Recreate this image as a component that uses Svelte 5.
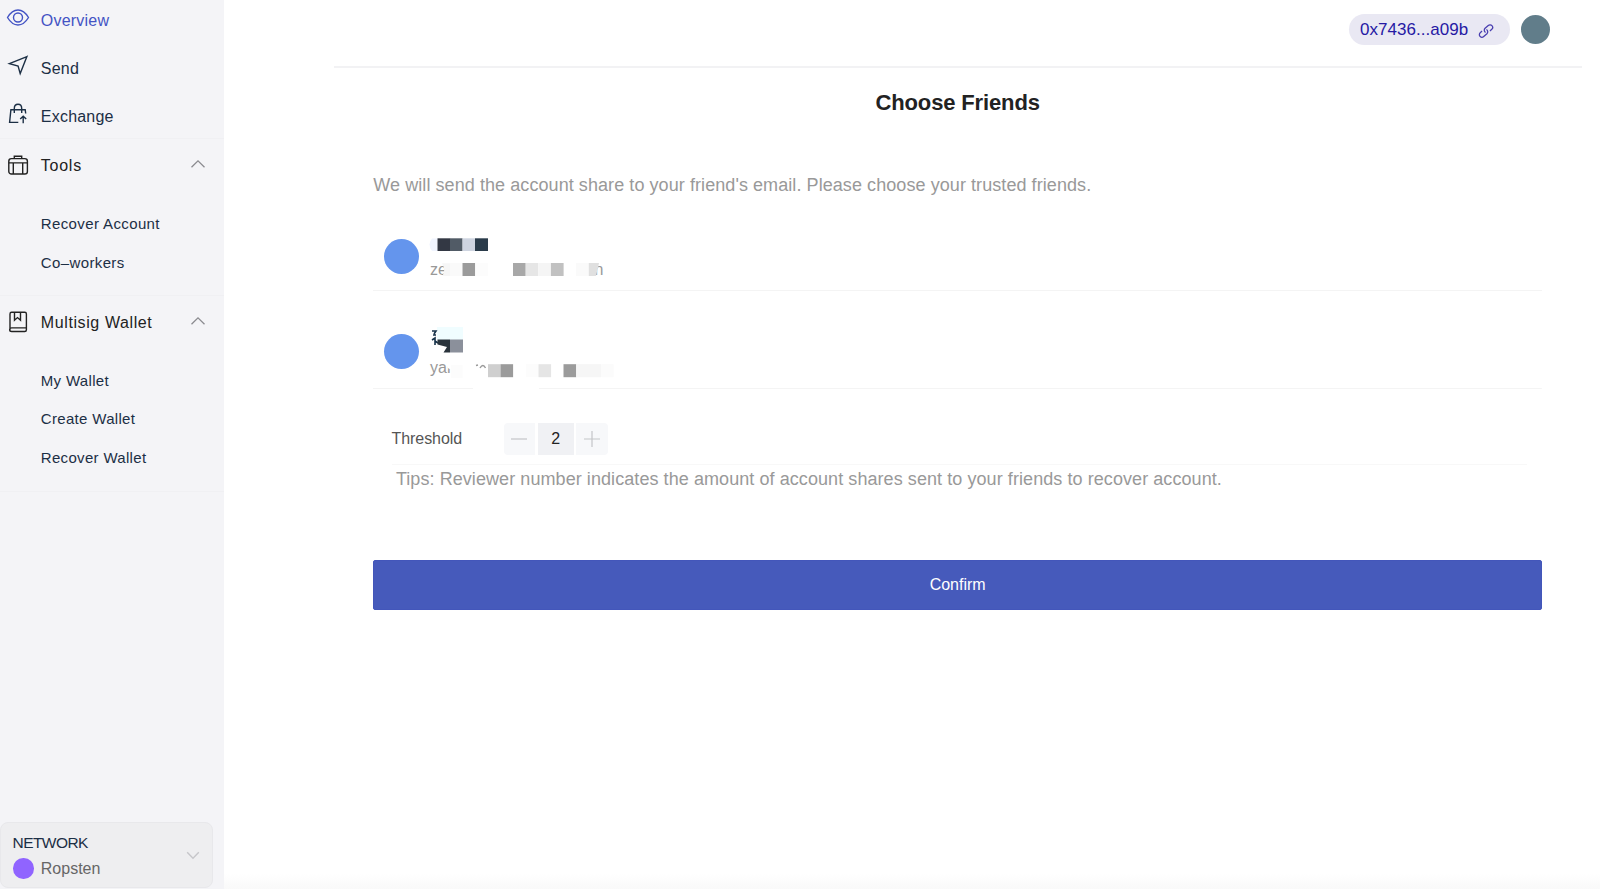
<script>
  const tools = ['Recover Account', 'Co–workers'];
  const wallets = ['My Wallet', 'Create Wallet', 'Recover Wallet'];
  let threshold = $state(2);
</script>

<div class="app">
  <aside>
    <nav class="top">
      <a class="item active">
        <svg width="24" height="24" viewBox="0 0 24 24"><path d="M1.5 12.5Q6 5 12 5T22.5 12.5Q18 20 12 20T1.5 12.5Z" /><circle cx="12" cy="12.5" r="4.5" /></svg>
        <span>Overview</span>
      </a>
      <a class="item">
        <svg width="24" height="24" viewBox="0 0 24 24"><path d="M20.9 3.6L3.4 10.7L12.1 13.1L14.2 20.6Z" /></svg>
        <span>Send</span>
      </a>
      <a class="item">
        <svg width="24" height="24" viewBox="0 0 24 24"><path d="M12.3 21.4H3.6L4.9 8.7H19.2L19.7 12.5M8.3 11.9V7.4C8.3 1.9 15.7 1.9 15.7 7.4V11.9M17.2 22.2V15.4M14.2 18.1L17.2 15.2L20.2 18.1" /></svg>
        <span>Exchange</span>
      </a>
    </nav>

    <div class="group head tools">
      <svg width="24" height="24" viewBox="0 0 24 24"><rect x="2.8" y="5.6" width="18.6" height="15.4" rx="2.6" /><path d="M2.8 9.9H21.4M7.3 9.9V21M16.7 9.9V21M8.3 5.5V3.2H15.7V5.5" /></svg>
      <span>Tools</span>
      <svg class="chev" width="16" height="10" viewBox="0 0 16 10"><path d="M1.5 8.2L8 1.8L14.5 8.2" /></svg>
    </div>
    <div class="sub">
      {#each tools as t}<a>{t}</a>{/each}
    </div>

    <div class="group head multi">
      <svg width="24" height="24" viewBox="0 0 24 24"><path d="M20.4 17.9H5.7C3 17.9 3 21.5 5.7 21.5H18.7Q20.4 21.5 20.4 19.7V3.9Q20.4 2.3 18.8 2.3H5.6Q4 2.3 4 3.9V19.7M8.5 2.3V10.3L11.5 7.6L14.5 10.3V2.3" /></svg>
      <span>Multisig Wallet</span>
      <svg class="chev" width="16" height="10" viewBox="0 0 16 10"><path d="M1.5 8.2L8 1.8L14.5 8.2" /></svg>
    </div>
    <div class="sub wallets">
      {#each wallets as w}<a>{w}</a>{/each}
    </div>

    <div class="network">
      <div>
        <div class="label">NETWORK</div>
        <div class="net"><i></i><span>Ropsten</span></div>
      </div>
      <svg width="14" height="9" viewBox="0 0 14 9"><path d="M1.2 1.2L7 7.2L12.8 1.2" /></svg>
    </div>
  </aside>

  <main>
    <header>
      <div class="pill">
        <span>0x7436...a09b</span>
        <svg width="16" height="16" viewBox="0 0 16 16"><g transform="rotate(-42 8 8)"><path d="M5 5.4H2.6A2.6 2.6 0 0 0 2.6 10.6H6.9A2.6 2.6 0 0 0 9.3 7.2M11 10.6H13.4A2.6 2.6 0 0 0 13.4 5.4H9.1A2.6 2.6 0 0 0 6.7 8.8" /></g></svg>
      </div>
      <div class="avatar"></div>
    </header>

    <section>
      <h1>Choose Friends</h1>
      <p class="intro">We will send the account share to your friend's email. Please choose your trusted friends.</p>

      <div class="friend one">
        <i></i>
        <svg width="200" height="46" viewBox="0 0 200 46">
          <path fill="#f0f4fe" d="M9.5 5.5H4Q-1 11 4 18H9.5Z" />
          <rect x="9.5" y="5.3" width="12.6" height="12.7" fill="#333844" /><rect x="22" y="5.3" width="12.6" height="12.7" fill="#515b66" /><rect x="34.5" y="5.3" width="12.6" height="12.7" fill="#ced4e0" /><rect x="47" y="5.3" width="13" height="12.7" fill="#2a3b4a" />
          <text x="2" y="42.3">ze</text><text x="166.5" y="42.3">n</text>
          <path fill="#f6f6f6" d="M14 30.3H22V43H14.5Q18 37 14 30.3Z" />
          <rect x="22" y="30" width="12.6" height="13" fill="#fafafa" /><rect x="34.5" y="30" width="12.7" height="13" fill="#9b9b9b" /><rect x="47.2" y="30" width="12.6" height="13" fill="#fcfcfc" />
          <rect x="85" y="30" width="12.7" height="13" fill="#a8a8a8" /><rect x="97.7" y="30" width="12.6" height="13" fill="#e6e6e6" /><rect x="110.3" y="30" width="12.6" height="13" fill="#f5f5f5" /><rect x="122.9" y="30" width="12.7" height="13" fill="#c1c1c1" />
          <rect x="148" y="30" width="13" height="13" fill="#fafafa" /><path fill="#e0e0e0" d="M160.8 30H171L168 43H160.8Z" />
        </svg>
      </div>
      <div class="friend two">
        <i></i>
        <svg width="200" height="56" viewBox="0 0 200 56">
          <rect x="9" y="0" width="26" height="13" fill="#f0fdff" />
          <path d="M4 4H8L6 7M5 8H8M4 13L7 11V18M7 14L10 16" stroke="#17324a" stroke-width="1.6" fill="none" />
          <path d="M9.5 12.5H22V25.5H15.5L19 20L9.5 17.5Z" fill="#2a343c" /><rect x="22" y="12.5" width="13" height="13" fill="#8b909b" />
          <text x="2" y="45.5">yan</text>
          <path d="M18.5 33H38V54H22.8V42Q18.5 43 18.5 33Z" fill="#fff" /><rect x="23" y="38" width="11.5" height="13" fill="#fcfcfc" />
          <path d="M48 38.5L50 38M52 41Q55 36 57.5 41" stroke="#999" fill="none" />
          <rect x="60" y="37.2" width="12.5" height="13" fill="#cfcfcf" /><rect x="72.5" y="37.2" width="12.6" height="13" fill="#9b9b9b" /><rect x="98" y="37.2" width="12.5" height="13" fill="#fcfcfc" /><rect x="110.5" y="37.2" width="12.6" height="13" fill="#e5e5e5" /><rect x="135.5" y="37.2" width="12.7" height="13" fill="#9b9b9b" /><rect x="148.2" y="37.2" width="25" height="13" fill="#f6f6f6" /><rect x="173.2" y="37.2" width="12.5" height="13" fill="#fbfbfb" />
        </svg>
      </div>

      <div class="threshold">
        <span class="tl">Threshold</span>
        <div class="stepper">
          <button class="l" aria-label="Decrease" onclick={() => threshold--}><svg width="16" height="16" viewBox="0 0 16 16"><path d="M0 8H16" /></svg></button>
          <b>{threshold}</b>
          <button class="r" aria-label="Increase" onclick={() => threshold++}><svg width="16" height="16" viewBox="0 0 16 16"><path d="M0 8H16M8 0V16" /></svg></button>
        </div>
      </div>
      <p class="tips">Tips: Reviewer number indicates the amount of account shares sent to your friends to recover account.</p>
      <button class="confirm">Confirm</button>
    </section>
  </main>
</div>

<style>
  :global(body) { margin: 0; overflow: hidden; }
  .app { display: flex; height: 889px; box-sizing: border-box; font-family: "Liberation Sans", Arial, sans-serif; font-size: 16px; color: #1c2f45; background: linear-gradient(#fff 874px, #f9f9f9 889px); }
  .app * { box-sizing: border-box; }
  svg { flex: none; fill: none; stroke: currentColor; stroke-width: 1.4; display: block; }
  aside { width: 224.4px; background: #f4f4f7; display: flex; flex-direction: column; }
  .top { height: 138px; display: flex; flex-direction: column; }
  .item { height: 48px; flex: none; display: flex; gap: 10.8px; padding: 5px 0 0 6px; letter-spacing: .22px; color: #1c2f45; }
  .item span { line-height: 31px; }
  .item.active { color: #4353c4; }
  .head { display: flex; align-items: center; height: 53px; flex: none; border-top: 1px solid #f0f0f3; padding-left: 6px; color: #222; letter-spacing: .6px; }
  .head span { margin-left: 10.8px; padding-top: 2px; }
  .tools span { letter-spacing: .75px; }
  .chev { margin: -2px 18.5px 0 auto; color: #8b8b90; stroke-width: 1.3; }
  .sub { height: 104px; padding: 13px 0 0 40.8px; display: flex; flex-direction: column; font-size: 15px; letter-spacing: .38px; }
  .sub a { line-height: 39px; height: 39px; flex: none; }
  .wallets { height: 144px; border-bottom: 1px solid #f0f0f3; padding-top: 13.5px; letter-spacing: .32px; }
  .wallets a { height: 38.8px; line-height: 38.8px; }
  .network { margin-top: auto; width: 213.4px; height: 66px; margin-bottom: 1px; background: #eeeef0; border: 1px solid #e8e8eb; border-radius: 8px; padding: 10px 12.5px 0 11.5px; display: flex; justify-content: space-between; font-size: 15.5px; }
  .label { line-height: 20px; letter-spacing: -.55px; }
  .net { display: flex; align-items: center; height: 31px; color: #666; gap: 7px; font-size: 16px; }
  .net i { width: 20.5px; height: 20.5px; border-radius: 50%; background: #9064ff; margin-left: .8px; }
  .network > svg { margin-top: 18px; color: #c6c6ca; }
  main { flex: 1; min-width: 0; }
  header { height: 68px; margin: 0 18px 0 109.3px; border-bottom: 2px solid #f2f2f4; padding: 14px 32.5px 0 0; display: flex; justify-content: flex-end; gap: 11px; }
  .pill { height: 31px; width: 161px; border-radius: 16px; background: #e9e8f3; color: #2619a4; display: flex; align-items: center; padding-left: 11.5px; font-size: 17px; letter-spacing: .03px; }
  .pill svg { margin: 2px 0 0 10px; color: #4a3fb0; stroke-width: 1.3; }
  .avatar { width: 29px; height: 29px; border-radius: 50%; background: #617d8a; margin-top: 1.4px; }
  section { margin: 0 58px 0 148.9px; }
  h1 { margin: 0; padding-top: 22px; height: 98px; font-size: 22px; line-height: 26px; font-weight: 700; text-align: center; color: #222; letter-spacing: -.14px; }
  p { margin: 0; color: #999; white-space: nowrap; font-size: 18px; letter-spacing: .072px; }
  .intro { height: 56px; line-height: 38px; }
  .friend { display: flex; align-items: flex-start; padding-left: 10.6px; }
  .friend i { width: 35px; height: 35px; border-radius: 50%; background: #6495ed; }
  .friend svg { margin-left: 9px; stroke: none; }
  .friend text { fill: #999; font-size: 16px; }
  .one { height: 69px; border-bottom: 1px solid #f4f4f4; padding-top: 16.5px; }
  .one svg { margin-top: -5.5px; }
  .two { height: 98px; padding-top: 42.5px; background: linear-gradient(to right, #f4f4f4 100px, #fff 100px 166px, #f4f4f4 166px) bottom / 100% 1px no-repeat; }
  .two svg { margin-top: -6.5px; }
  .threshold { display: flex; align-items: center; margin: 0 15px 0 18.3px; height: 76px; border-bottom: 1px solid #f8f8f8; padding-top: 24px; }
  .tl { width: 112px; color: #555; letter-spacing: -.08px; }
  .stepper { display: flex; gap: 2.5px; }
  .stepper button, .stepper b { height: 32px; width: 31.5px; border: 0; padding: 0; background: #f7f8fa; color: #c4c5c8; display: grid; place-items: center; }
  .stepper b { width: 36px; background: #f0f1f4; color: #222; font-weight: 400; padding-top: 1px; }
  .stepper svg { stroke-width: 1.2; }
  .l { border-radius: 4px 0 0 4px; }
  .r { border-radius: 0 4px 4px 0; }
  .tips { padding-left: 22.6px; height: 95px; line-height: 28px; }
  .confirm { width: 100%; height: 50px; border: 1px solid #4356ba; border-radius: 2px; background: #465abb; color: #fff; font: 16px "Liberation Sans", Arial, sans-serif; display: block; padding: 0; }
</style>
